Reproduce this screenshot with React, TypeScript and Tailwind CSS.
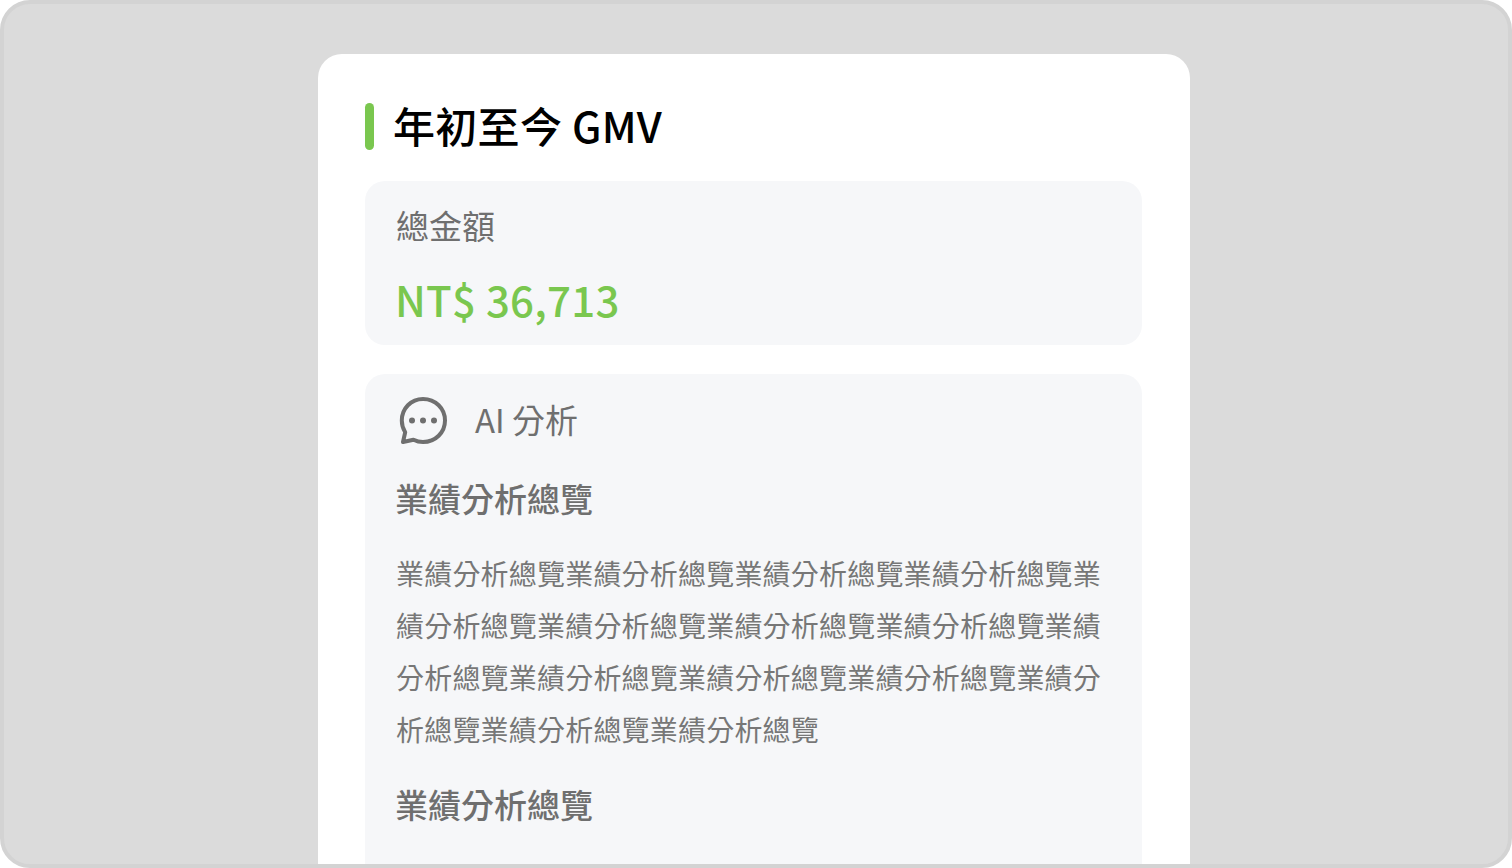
import React from "react";

const font = { fontFamily: '"Noto Sans CJK TC", "Noto Sans", sans-serif' };
const para =
  "業績分析總覽業績分析總覽業績分析總覽業績分析總覽業績分析總覽業績分析總覽業績分析總覽業績分析總覽業績分析總覽業績分析總覽業績分析總覽業績分析總覽業績分析總覽業績分析總覽業績分析總覽";

export default function App() {
  return (
    <div className="h-[868px] w-[1512px] overflow-hidden bg-white" style={font}>
      <div className="flex h-full w-full overflow-hidden rounded-[30px] border-[4px] border-[#d3d3d3] bg-[#dbdbdb] pt-[50px] pl-[314px]">
        <div className="h-[900px] w-[872px] shrink-0 rounded-[24px] bg-white pt-[49px] pr-[48px] pl-[47px]">
          <div className="flex h-[47px] items-center gap-[20px]">
            <div className="h-[47px] w-[9px] shrink-0 rounded-full bg-[#7ac74f]" />
            <h1 className="-mt-[4px] -ml-[1px] text-[42px] leading-[47px] font-medium tracking-[0.3px] text-black">年初至今 GMV</h1>
          </div>
          <div className="mt-[31px] h-[164px] rounded-[20px] bg-[#f6f7f9] pt-[20px] pl-[30px]">
            <div className="ml-[1px] text-[33px] leading-[48px] text-[#6f6f6f]">總金額</div>
            <div className="mt-[22px] text-[42px] leading-[56px] font-medium tracking-[0.25px] text-[#7ac74f]">NT$ 36,713</div>
          </div>
          <div className="mt-[29px] h-[520px] rounded-[20px] bg-[#f6f7f9] pt-[22px] pr-[31px] pl-[30px]">
            <div className="flex h-[50px] items-center gap-[27px]">
              <svg width="50" height="50" viewBox="0 0 50 50" fill="none" className="ml-[3px] shrink-0">
                <path
                  d="M25 3C37.5 3 47 12.5 47 24.5C47 36.5 37.5 46 25 46C21.5 46 18.5 45.2 15.5 43.7L5 46L7.2 36.2C5 32.7 3.8 28.7 3.8 24.5C3.8 12.5 13 3 25 3Z"
                  stroke="#6f6f6f"
                  strokeWidth="4"
                  strokeLinejoin="round"
                />
                <circle cx="14" cy="24.5" r="3" fill="#6f6f6f" />
                <circle cx="25" cy="24.5" r="3" fill="#6f6f6f" />
                <circle cx="36" cy="24.5" r="3" fill="#6f6f6f" />
              </svg>
              <div className="-mt-[4px] text-[33px] leading-[48px] text-[#6f6f6f]">AI 分析</div>
            </div>
            <h2 className="mt-[26px] text-[33px] leading-[52px] font-medium text-[#6f6f6f]">業績分析總覽</h2>
            <p className="mt-[23px] ml-[1px] w-[712px] text-[28px] leading-[52px] tracking-[0.2px] text-[#777777]">{para}</p>
            <h2 className="mt-[23px] text-[33px] leading-[52px] font-medium text-[#6f6f6f]">業績分析總覽</h2>
          </div>
        </div>
      </div>
    </div>
  );
}
